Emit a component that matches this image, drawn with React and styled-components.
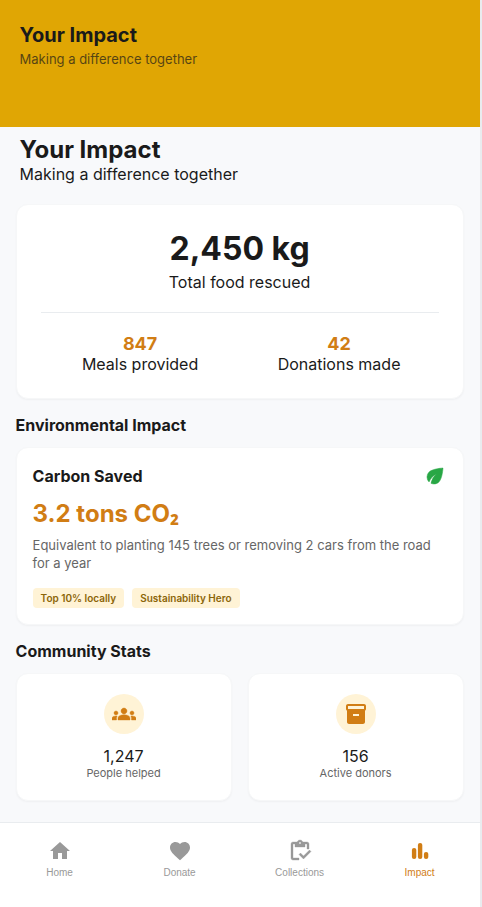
import styled, { createGlobalStyle } from "styled-components";
import {
  MdEco,
  MdFavorite,
  MdGroups,
  MdHome,
  MdInventory2,
} from "react-icons/md";

const BarsIcon = ({ size }) => (
  <svg width={size} height={size} viewBox="0 0 24 24" fill="currentColor">
    <rect x="3.9" y="9" width="4.4" height="11" rx="2.1" />
    <rect x="9.9" y="4" width="4.4" height="16" rx="2.1" />
    <rect x="15.9" y="13" width="4.4" height="7" rx="2.1" />
  </svg>
);

const ClipboardIcon = ({ size }) => (
  <svg
    width={size}
    height={size}
    viewBox="0 0 24 24"
    fill="currentColor"
    stroke="currentColor"
    strokeWidth="0.35"
  >
    <path d="M5 5h2v3h10V5h2v5h2V5c0-1.1-.9-2-2-2h-4.18C14.4 1.84 13.3 1 12 1s-2.4.84-2.82 2H5c-1.1 0-2 .9-2 2v14c0 1.1.9 2 2 2h6v-2H5V5zm7-2c.55 0 1 .45 1 1s-.45 1-1 1-1-.45-1-1 .45-1 1-1z" />
    <path d="M21.5 11 15.51 17l-3.01-3-1.5 1.5 4.51 4.5L23 12.5z" />
  </svg>
);

const totals = [
  { value: "847", label: "Meals provided" },
  { value: "42", label: "Donations made" },
];

const badges = ["Top 10% locally", "Sustainability Hero"];

const community = [
  { icon: MdGroups, value: "1,247", label: "People helped", bold: true },
  { icon: MdInventory2, value: "156", label: "Active donors" },
];

const tabs = [
  { icon: MdHome, label: "Home" },
  { icon: MdFavorite, label: "Donate" },
  { icon: ClipboardIcon, label: "Collections" },
  { icon: BarsIcon, label: "Impact", active: true },
];

const App = () => {
  return (
    <>
      <GlobalStyle />
      <Screen>
        <Header>
          <HeaderTitle>Your Impact</HeaderTitle>
          <HeaderSubtitle>Making a difference together</HeaderSubtitle>
        </Header>
        <Content>
          <Intro>
            <PageTitle>Your Impact</PageTitle>
            <Text>Making a difference together</Text>
          </Intro>
          <TotalCard>
            <TotalValue>2,450 kg</TotalValue>
            <Text>Total food rescued</Text>
            <TotalGrid>
              {totals.map(({ value, label }) => (
                <div key={label}>
                  <StatValue>{value}</StatValue>
                  <Text>{label}</Text>
                </div>
              ))}
            </TotalGrid>
          </TotalCard>
          <SectionTitle>Environmental Impact</SectionTitle>
          <CarbonCard>
            <CardHeader>
              <CardTitle>Carbon Saved</CardTitle>
              <LeafIcon size={24} />
            </CardHeader>
            <CarbonValue>
              3.2 tons CO<Subscript>₂</Subscript>
            </CarbonValue>
            <Description>
              Equivalent to planting 145 trees or removing 2 cars from the road
              for a year
            </Description>
            <Badges>
              {badges.map((badge) => (
                <Badge key={badge}>{badge}</Badge>
              ))}
            </Badges>
          </CarbonCard>
          <SectionTitle>Community Stats</SectionTitle>
          <CommunityGrid>
            {community.map(({ icon: Icon, value, label, bold }) => (
              <CommunityCard key={label}>
                <IconCircle $bold={bold}>
                  <Icon size={24} />
                </IconCircle>
                <Text>{value}</Text>
                <SmallText>{label}</SmallText>
              </CommunityCard>
            ))}
          </CommunityGrid>
        </Content>
        <TabBar>
          {tabs.map(({ icon: Icon, label, active }) => (
            <Tab key={label} $active={active}>
              <Icon size={24} />
              <span>{label}</span>
            </Tab>
          ))}
        </TabBar>
      </Screen>
    </>
  );
};

export default App;

const GlobalStyle = createGlobalStyle`
  * {
    box-sizing: border-box;
  }

  body {
    margin: 0;
    background-color: #e9ecef;
    color: #1a1a1a;
    font-family: "Inter", sans-serif;
  }

  h1, h2, h3, p {
    margin: 0;
  }

  svg {
    display: block;
  }

  /* react-icons adds an empty 24x24 frame path to some icons */
  path[fill="none"] {
    stroke: none;
  }
`;

const Screen = styled.div`
  display: flex;
  flex-direction: column;
  width: 480px;
  height: 907px;
  margin-left: -0.45px;
  background-color: #f8f9fb;
`;

const Header = styled.header`
  height: 127px;
  padding: 23px 20px 0;
  background-color: #e0a604;
`;

const HeaderTitle = styled.h1`
  font-size: 20px;
  line-height: 24px;
  font-weight: 700;
`;

const HeaderSubtitle = styled.p`
  margin-top: 4px;
  font-size: 13px;
  line-height: 16px;
  opacity: 0.7;
`;

const Content = styled.main`
  flex: 1;
  padding: 8px 16px 0;
`;

const Intro = styled.div`
  padding: 0 4px;
  margin-bottom: 20px;
`;

const PageTitle = styled.h2`
  font-size: 24px;
  line-height: 30px;
  font-weight: 700;
`;

const Text = styled.p`
  font-size: 16px;
  line-height: 19px;
`;

const Card = styled.section`
  background-color: #fff;
  border: 1px solid #f6f7f8;
  border-radius: 12px;
  box-shadow: 0 1px 2px rgba(0, 0, 0, 0.04);
`;

const TotalCard = styled(Card)`
  height: 195px;
  padding: 24px;
  text-align: center;
`;

const TotalValue = styled.div`
  margin-bottom: 5px;
  font-size: 32px;
  line-height: 39px;
  font-weight: 700;
`;

const TotalGrid = styled.div`
  display: grid;
  grid-template-columns: 1fr 1fr;
  margin-top: 20px;
  padding-top: 20px;
  border-top: 1px solid #e9ecef;
`;

const StatValue = styled.div`
  color: #d17d14;
  font-size: 18px;
  line-height: 22px;
  font-weight: 700;
`;

const SectionTitle = styled.h3`
  margin: 17px 0 12px;
  font-size: 16px;
  line-height: 19px;
  font-weight: 700;
`;

const CarbonCard = styled(Card)`
  height: 178px;
  padding: 16px;
`;

const CardHeader = styled.div`
  display: flex;
  align-items: center;
  justify-content: space-between;
`;

const CardTitle = styled.h3`
  font-size: 16px;
  line-height: 19px;
  font-weight: 700;
`;

const LeafIcon = styled(MdEco)`
  color: #28a745;
  stroke-width: 0.5;
`;

const CarbonValue = styled.div`
  height: 29px;
  margin: 11px 0 8px;
  color: #d17d14;
  font-size: 24px;
  line-height: 29px;
  font-weight: 700;
`;

const Subscript = styled.span`
  font-family: "Open Sans", "Noto Sans", sans-serif;
  line-height: 1;
`;

const Description = styled.p`
  color: #666;
  font-size: 13px;
  line-height: 18px;
`;

const Badges = styled.div`
  display: flex;
  gap: 8px;
  margin-top: 16px;
`;

const Badge = styled.span`
  padding: 4px 8px;
  border-radius: 4px;
  background-color: #fff3d6;
  color: #8b6508;
  font-size: 10px;
  line-height: 12px;
  font-weight: 600;
`;

const CommunityGrid = styled.div`
  display: grid;
  grid-template-columns: 1fr 1fr;
  gap: 16px;
`;

const CommunityCard = styled(Card)`
  display: flex;
  flex-direction: column;
  align-items: center;
  height: 128px;
  padding-top: 20px;
`;

const IconCircle = styled.div`
  display: grid;
  place-items: center;
  width: 40px;
  height: 40px;
  margin-bottom: 13px;
  border-radius: 50%;
  background-color: #fff3d6;
  color: #d17d14;

  svg {
    stroke-width: ${({ $bold }) => ($bold ? 0.4 : 0)};
  }
`;

const SmallText = styled.p`
  color: #666;
  font-size: 11px;
  line-height: 14px;
`;

const TabBar = styled.nav`
  display: grid;
  grid-template-columns: repeat(4, 1fr);
  height: 85px;
  padding-top: 16px;
  border-top: 1px solid #e9ecef;
  background-color: #fff;
`;

const Tab = styled.div`
  display: flex;
  flex-direction: column;
  align-items: center;
  gap: 4px;
  color: ${({ $active }) => ($active ? "#d17d14" : "#999")};
  font-family: "Liberation Sans", Arial, sans-serif;
  font-size: 10px;
  line-height: 12px;
`;
